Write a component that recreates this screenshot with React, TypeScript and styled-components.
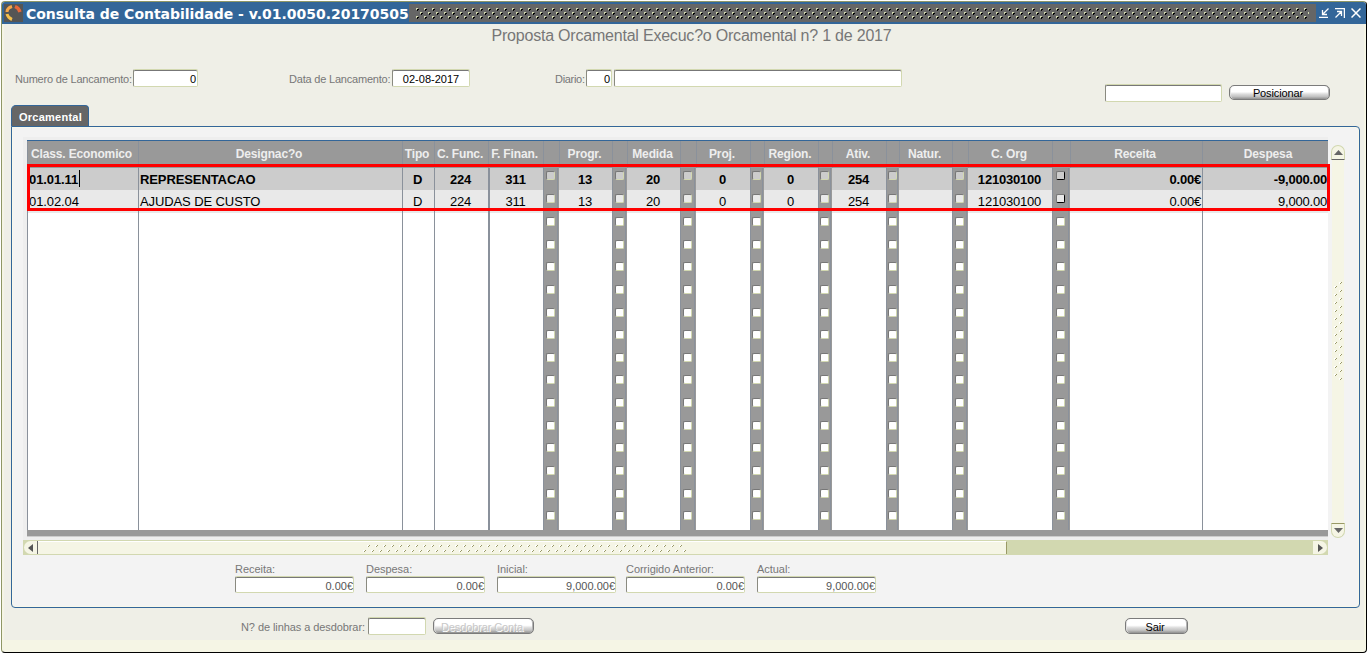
import React from "react";
import styled, { createGlobalStyle } from "styled-components";

const GlobalStyle = createGlobalStyle`
  *, *::before, *::after { box-sizing: border-box; }
  body {
    margin: 0;
    background: #ffffff;
    font-family: "Liberation Sans", Arial, sans-serif;
    font-size: 11px;
    color: #000;
    overflow: hidden;
  }
`;

const Window = styled.div`
  margin: 1px 0 0 1px;
  width: 1366px;
  height: 652px;
  display: flex;
  flex-direction: column;
  border: 1px solid #8f9766;
  border-right-color: #000;
  border-bottom-color: #000;
  border-radius: 4px;
  background: #f5f5e5;
  overflow: hidden;
`;

const TitleBar = styled.header`
  display: flex;
  align-items: center;
  height: 22px;
  flex: none;
  background: #336699;
  padding-right: 5px;
`;

const AppIcon = styled.svg`
  flex: none;
  width: 19px;
  height: 18px;
  margin-left: 2px;
  background: #555555;
`;

const Caption = styled.h1`
  margin: 0;
  padding: 1px 0 0 3px;
  width: 386px;
  flex: none;
  font: bold 14px/20px "DejaVu Sans", Verdana, sans-serif;
  letter-spacing: -0.02px;
  color: #fff;
  white-space: nowrap;
`;

const DragStrip = styled.svg`
  flex: 1;
  height: 18px;
  background: #666666;
`;

const WindowButtons = styled.div`
  display: flex;
  align-items: center;
  gap: 6px;
  padding-left: 3px;
`;

const Content = styled.main`
  height: 616px;
  margin: 0 2px;
  padding: 2px 4px 0 7px;
  background: #efefe7;
  display: flex;
  flex-direction: column;
`;

const Heading = styled.h2`
  margin: 0;
  padding-left: 12px;
  height: 43px;
  font-weight: normal;
  font-size: 16px;
  line-height: 19px;
  letter-spacing: -0.21px;
  text-align: center;
  color: #777777;
`;

const FieldRow = styled.div`
  display: flex;
  align-items: flex-start;
  height: 36px;
  padding-left: 4px;
`;

const Label = styled.label<{ $w?: number; $ls?: number }>`
  flex: none;
  width: ${(p) => (p.$w ? `${p.$w}px` : "auto")};
  line-height: 20px;
  letter-spacing: ${(p) => p.$ls ?? -0.2}px;
  color: #777777;
  white-space: nowrap;
`;

const Field = styled.div<{ $w: number; $h?: number; $align?: string; $gap?: number; $top?: number; $color?: string }>`
  flex: none;
  width: ${(p) => p.$w}px;
  height: ${(p) => p.$h ?? 18}px;
  margin-right: ${(p) => p.$gap ?? 0}px;
  margin-top: ${(p) => p.$top ?? 0}px;
  padding: 0 1px;
  background: #fff;
  border: 1px solid #d2d8b0;
  border-left-color: #8a8a80;
  border-radius: 2px;
  box-shadow: inset 0 1px 0 #777777;
  line-height: ${(p) => (p.$h ?? 18) + 1}px;
  text-align: ${(p) => p.$align ?? "right"};
  color: ${(p) => p.$color ?? "#000"};
  white-space: nowrap;
`;

const Button = styled.button<{ $w: number; $h: number; $top?: number; $disabled?: boolean }>`
  flex: none;
  width: ${(p) => p.$w}px;
  height: ${(p) => p.$h}px;
  margin: ${(p) => p.$top ?? 0}px 0 0;
  padding: 0 3px 0 0;
  border: 1px solid #7b7b7b;
  border-radius: 5px;
  box-shadow: inset 1px 0 0 #e2e2e2, inset -1px 0 0 #b5b5b5;
  background: linear-gradient(#fff 0, #fff 45%, #dcdcdc 62%, #c4c4c4 80%, #8f8f8f 100%);
  font: 11px/${(p) => p.$h}px "Liberation Sans", Arial, sans-serif;
  letter-spacing: -0.12px;
  color: ${(p) => (p.$disabled ? "#c8c8c8" : "#000")};
  text-shadow: ${(p) => (p.$disabled ? "1px 1px 0 #fff" : "none")};
  white-space: nowrap;
`;

const Tab = styled.div`
  width: 78px;
  height: 21px;
  flex: none;
  border: 1px solid #336699;
  border-bottom: 0;
  border-radius: 5px 4px 0 0;
  background: #666666;
  color: #fff;
  padding-left: 1px;
  font-weight: bold;
  letter-spacing: 0.25px;
  line-height: 23px;
  text-align: center;
`;

const Panel = styled.section`
  height: 482px;
  flex: none;
  border: 1px solid #336699;
  border-radius: 0 4px 4px 4px;
  box-shadow: inset 0 0 0 1px #f8f8ea;
  background: #f3f3f3;
  padding: 10px 0 0 11px;
`;

const TableArea = styled.div`
  display: flex;
  gap: 3px;
  width: 1322px;
  height: 403px;
`;

const TableFrame = styled.div`
  width: 1305px;
  flex: none;
  padding: 3px 0 0 4px;
  background: #eeeeee;
`;

const columns =
  "111px 264px 32px 54px 55px 16px 53px 15px 53px 16px 54px 14px 54px 14px 54px 13px 53px 16px 84px 18px 132px 126px";

const Table = styled.div`
  width: 1301px;
  height: 397px;
  display: flex;
  flex-direction: column;
  border-top: 1px solid #336699;
  border-bottom: 1px solid #cccccc;
`;

const HeadRow = styled.div`
  display: grid;
  grid-template-columns: ${columns};
  height: 27px;
  flex: none;
  background: #999999;
`;

const HeadCell = styled.div<{ $shift?: number }>`
  padding-right: ${(p) => (p.$shift ? 0 : 3)}px;
  padding-left: ${(p) => p.$shift ?? 0}px;
  border-left: 1px solid #8a919b;
  font-weight: bold;
  font-size: 12px;
  line-height: 26px;
  letter-spacing: -0.14px;
  text-align: center;
  color: #eeeeee;
  white-space: nowrap;
  overflow: hidden;
`;

const Rows = styled.div`
  position: relative;
  flex: 1;
  display: flex;
  flex-direction: column;
`;

const Row = styled.div<{ $bg: string; $h?: number; $bold?: boolean }>`
  display: grid;
  grid-template-columns: ${columns};
  ${(p) => (p.$h ? `flex: none; height: ${p.$h}px;` : "flex: 1;")}
  background: ${(p) => p.$bg};
  font-size: 13px;
  font-weight: ${(p) => (p.$bold ? "bold" : "normal")};
  line-height: 23px;
`;

const Cell = styled.div<{ $align?: string; $line?: string }>`
  border-left: ${(p) => p.$line ?? "1px solid transparent"};
  padding: ${(p) => (p.$align === "center" ? "0 2px 0 0" : "0 1px")};
  letter-spacing: ${(p) => (p.$align === "left" ? -0.1 : -0.2)}px;
  text-align: ${(p) => p.$align ?? "center"};
  white-space: nowrap;
`;

const Caret = styled.span`
  display: inline-block;
  width: 1px;
  height: 17px;
  margin-left: 1px;
  vertical-align: top;
  margin-top: 2px;
  background: #000;
`;

const CheckCell = styled.div<{ $top: number }>`
  display: flex;
  justify-content: center;
  align-items: flex-start;
  padding: ${(p) => p.$top}px 1px 0 0;
  background: linear-gradient(90deg, #8a919b 1px, #999999 1px, #999999 calc(100% - 2px), #8a919b calc(100% - 2px), #8a919b calc(100% - 1px), #999999 calc(100% - 1px));
`;

const CheckBox = styled.span<{ $bg: string; $dark?: boolean }>`
  width: 9px;
  height: 9px;
  border: 1px solid #777777;
  border-right-color: ${(p) => (p.$dark ? "#000" : "#d2d8b0")};
  border-bottom-color: ${(p) => (p.$dark ? "#000" : "#d2d8b0")};
  border-radius: 2px;
  background: ${(p) => p.$bg};
`;

const TableFoot = styled.div`
  height: 6px;
  flex: none;
  background: #999999;
`;

const Highlight = styled.div`
  position: absolute;
  left: 0;
  top: -4px;
  width: 1303px;
  height: 47px;
  border: 3px solid #ff0000;
  pointer-events: none;
`;

const VScroll = styled.div`
  margin-top: 8px;
  width: 14px;
  height: 393px;
  display: flex;
  flex-direction: column;
  align-items: center;
`;

const VEnd = styled.div<{ $down?: boolean }>`
  width: 14px;
  height: 15px;
  flex: none;
  display: flex;
  align-items: center;
  justify-content: center;
  background: #f5f5e5;
  border: 1px solid #d2d8b0;
  border-radius: ${(p) => (p.$down ? "0 0 7px 7px" : "7px 7px 0 0")};
  ${(p) => (p.$down ? "border-top-color: #999966;" : "border-bottom-color: #666666;")}
`;

const VThumb = styled.svg`
  width: 12px;
  flex: 1;
  background: #f5f5e5;
`;

const HScroll = styled.div`
  display: flex;
  width: 1305px;
  height: 15px;
  padding: 1px;
  background: #d2d8b0;
`;

const HEnd = styled.div<{ $right?: boolean }>`
  width: 14px;
  display: flex;
  align-items: center;
  justify-content: center;
  background: #f5f5e5;
  border-radius: ${(p) => (p.$right ? "0 7px 7px 0" : "7px 0 0 7px")};
  border-right: ${(p) => (p.$right ? "0" : "1px solid #666666")};
`;

const HThumb = styled.svg`
  width: 969px;
  height: 13px;
  background: #f5f5e5;
  border-top: 1px solid #fff;
  border-right: 1px solid #999966;
`;

const HTrack = styled.div`
  flex: 1;
`;

const Totals = styled.div`
  display: flex;
  padding: 7px 0 0 212px;
`;

const Total = styled.div<{ $w: number }>`
  width: ${(p) => p.$w}px;
  display: flex;
  flex-direction: column;
  ${Label} { line-height: 14px; }
  ${Field} { padding: 0; }
`;

const Footer = styled.footer`
  display: flex;
  align-items: flex-start;
  padding: 9px 0 0 230px;
`;

const Spacer = styled.div<{ $w?: number }>`
  flex: ${(p) => (p.$w ? `0 0 ${p.$w}px` : "1")};
`;

const headers: (string | null)[] = [
  "Class. Economico", "Designac?o", "Tipo", "C. Func.", "F. Finan.", null, "Progr.", null, "Medida", null,
  "Proj.", null, "Region.", null, "Ativ.", null, "Natur.", null, "C. Org", null, "Receita", "Despesa",
];

type Entry = (string | null)[];

const entries: Entry[] = [
  ["01.01.11", "REPRESENTACAO", "D", "224", "311", null, "13", null, "20", null, "0", null, "0", null, "254", null, "", null, "121030100", null, "0.00€", "-9,000.00"],
  ["01.02.04", "AJUDAS DE CUSTO", "D", "224", "311", null, "13", null, "20", null, "0", null, "0", null, "254", null, "", null, "121030100", null, "0.00€", "9,000.00"],
];

const blank: Entry = headers.map((h) => (h === null ? null : ""));

const alignOf = (i: number) => (i < 2 ? "left" : i > 19 ? "right" : "center");
const lineOf = (i: number) => {
  if (i === 4) return "2px solid #8a919b";
  if ([0, 1, 2, 3, 21].includes(i)) return "1px solid #8a919b";
  return undefined;
};

function DataRow({ cells, index }: { cells: Entry; index: number }) {
  const bg = index === 0 ? "#cccccc" : index === 1 ? "#e9e9e9" : "#ffffff";
  return (
    <Row $bg={bg} $bold={index === 0} $h={index === 0 ? 22 : index === 1 ? 23 : undefined}>
      {cells.map((text, i) =>
        text === null ? (
          <CheckCell key={i} $top={index === 0 ? 3 : 4}>
            <CheckBox $bg={bg} $dark={index < 2 && i === 19} />
          </CheckCell>
        ) : (
          <Cell key={i} $align={alignOf(i)} $line={lineOf(i)}>
            {text}
            {index === 0 && i === 0 && <Caret />}
          </Cell>
        )
      )}
    </Row>
  );
}

const totals = [
  { label: "Receita:", value: "0.00€", w: 131 },
  { label: "Despesa:", value: "0.00€", w: 131 },
  { label: "Inicial:", value: "9,000.00€", w: 129 },
  { label: "Corrigido Anterior:", value: "0.00€", w: 131 },
  { label: "Actual:", value: "9,000.00€", w: 119 },
];

export default function App() {
  return (
    <>
      <GlobalStyle />
      <Window>
        <TitleBar>
          <AppIcon viewBox="0 0 19 18">
            <path d="M3 8 Q3 4 8 2.5" fill="none" stroke="#f7a84a" strokeWidth="3" />
            <path d="M11 2.5 Q15 4 16 8" fill="none" stroke="#e8683a" strokeWidth="3.4" />
            <path d="M3 10 Q4 14 8 15.5" fill="none" stroke="#f5c04a" strokeWidth="3" />
          </AppIcon>
          <Caption>Consulta de Contabilidade - v.01.0050.20170505</Caption>
          <DragStrip shapeRendering="crispEdges">
            <defs>
              <pattern id="dots" width="8" height="8" patternUnits="userSpaceOnUse" x="7" y="4">
                <path d="M1 1h2v1h-1v1h-1zM5 5h2v1h-1v1h-1z" fill="#000" />
                <path d="M0 0h2v1h-1v1h-1zM4 4h2v1h-1v1h-1z" fill="#d2d8b0" />
              </pattern>
            </defs>
            <rect x="7" y="4" width="893" height="11" fill="url(#dots)" />
          </DragStrip>
          <WindowButtons>
            <svg width="10" height="10" viewBox="0 0 10 10" fill="none" stroke="#fff" strokeWidth="1.3">
              <path d="M9.5 0.5L4 6M3.5 2v4.5H8M0 9.3h9" />
            </svg>
            <svg width="10" height="10" viewBox="0 0 10 10" fill="none" stroke="#fff" strokeWidth="1.3">
              <path d="M0.5 9.5L6 4M2 3.5h4.5V8M0 0.6h9.4V10" />
            </svg>
            <svg width="10" height="10" viewBox="0 0 10 10" fill="none" stroke="#fff" strokeWidth="1.5">
              <path d="M0.5 0.5l9 9M9.5 0.5l-9 9" />
            </svg>
          </WindowButtons>
        </TitleBar>

        <Content>
          <Heading>Proposta Orcamental Execuc?o Orcamental n? 1 de 2017</Heading>
          <FieldRow>
            <Label $w={118}>Numero de Lancamento:</Label>
            <Field $w={65}>0</Field>
            <Spacer $w={91} />
            <Label $w={103}>Data de Lancamento:</Label>
            <Field $w={78} $align="center">02-08-2017</Field>
            <Spacer $w={85} />
            <Label $w={31} $ls={-0.3}>Diario:</Label>
            <Field $w={26} $gap={2}>0</Field>
            <Field $w={288} />
            <Spacer $w={203} />
            <Field $w={117} $gap={7} $top={15} />
            <Button $w={101} $h={15} $top={16}>Posicionar</Button>
          </FieldRow>

          <Tab>Orcamental</Tab>
          <Panel>
            <TableArea>
              <TableFrame>
                <Table>
                  <HeadRow>
                    {headers.map((h, i) => (
                      <HeadCell key={i} $shift={i === 21 ? 5 : 0}>{h}</HeadCell>
                    ))}
                  </HeadRow>
                  <Rows>
                    {entries.map((cells, i) => (
                      <DataRow key={i} cells={cells} index={i} />
                    ))}
                    {Array.from({ length: 14 }, (_, i) => (
                      <DataRow key={i + 2} cells={blank} index={i + 2} />
                    ))}
                    <Highlight />
                  </Rows>
                  <TableFoot />
                </Table>
              </TableFrame>
              <VScroll>
                <VEnd>
                  <svg width="9" height="5"><path d="M0 5L4.5 0L9 5z" fill="#666" /></svg>
                </VEnd>
                <VThumb shapeRendering="crispEdges">
                  <defs>
                    <pattern id="vgrip" width="12" height="8" patternUnits="userSpaceOnUse" y="121">
                      <path d="M7 1h2v1h-1v1h-1zM2 5h2v1h-1v1h-1z" fill="#fff" />
                      <path d="M9 1h1v1h-1v1h-1v-1h1zM4 5h1v1h-1v1h-1v-1h1z" fill="#999966" />
                    </pattern>
                  </defs>
                  <rect y="121" width="12" height="100" fill="url(#vgrip)" />
                </VThumb>
                <VEnd $down>
                  <svg width="9" height="5"><path d="M0 0h9L4.5 5z" fill="#666" /></svg>
                </VEnd>
              </VScroll>
            </TableArea>
            <HScroll>
              <HEnd>
                <svg width="5" height="8"><path d="M5 0v8L0 4z" fill="#555" /></svg>
              </HEnd>
              <HThumb shapeRendering="crispEdges">
                <defs>
                  <pattern id="hgrip" width="8" height="10" patternUnits="userSpaceOnUse" x="325" y="2">
                    <path d="M4 1h2v1h-1v1h-1zM0 6h2v1h-1v1h-1z" fill="#fff" />
                    <path d="M6 1h1v1h-1v1h-1v-1h1zM2 6h1v1h-1v1h-1v-1h1z" fill="#999966" />
                  </pattern>
                </defs>
                <rect x="325" y="2" width="323" height="10" fill="url(#hgrip)" />
              </HThumb>
              <HTrack />
              <HEnd $right>
                <svg width="5" height="8"><path d="M0 0v8L5 4z" fill="#555" /></svg>
              </HEnd>
            </HScroll>
            <Totals>
              {totals.map((t) => (
                <Total key={t.label} $w={t.w}>
                  <Label $ls={-0.04}>{t.label}</Label>
                  <Field $w={119} $h={17} $color="#555555">{t.value}</Field>
                </Total>
              ))}
            </Totals>
          </Panel>
          <Footer>
            <Label $w={127} $ls={-0.08}>N? de linhas a desdobrar:</Label>
            <Field $w={58} $gap={7} />
            <Button $w={101} $h={16} $top={1} $disabled>Desdobrar Conta</Button>
            <Spacer $w={591} />
            <Button $w={63} $h={16} $top={1}>Sair</Button>
          </Footer>
        </Content>
      </Window>
    </>
  );
}
